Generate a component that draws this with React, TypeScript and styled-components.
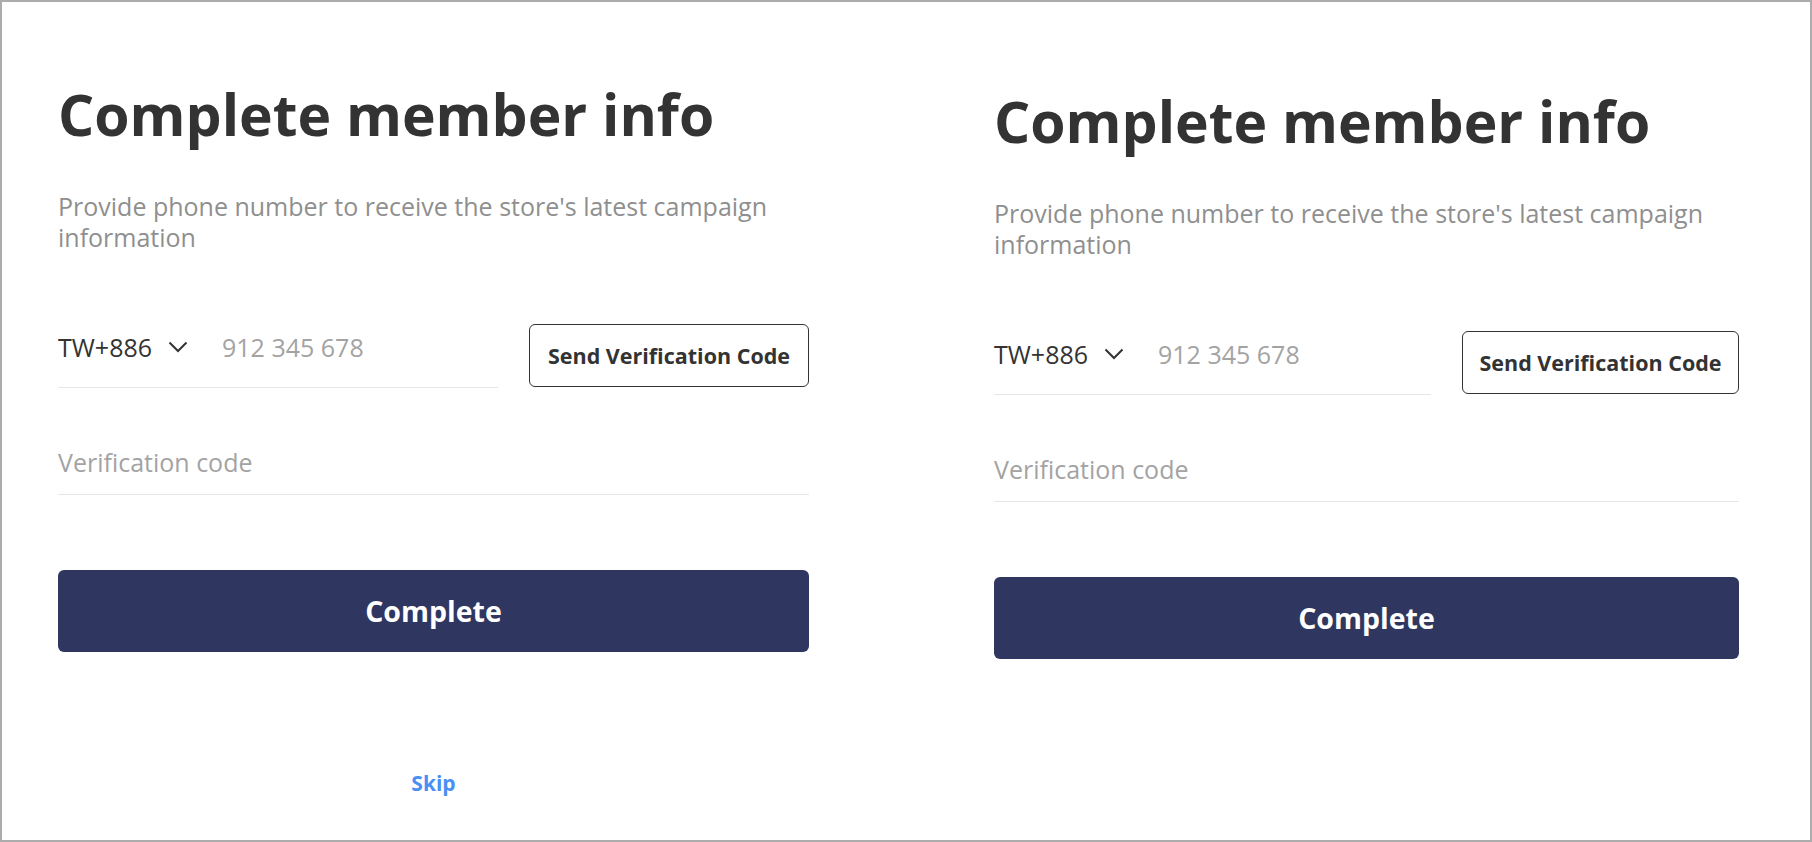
import React from "react";
import styled, { createGlobalStyle } from "styled-components";

const GlobalStyle = createGlobalStyle`
  html, body {
    margin: 0;
    padding: 0;
    background: #ffffff;
  }
  body {
    font-family: "Open Sans", "Noto Sans", sans-serif;
    color: #333333;
  }
  * {
    box-sizing: border-box;
  }
`;

const Frame = styled.div`
  width: 1812px;
  height: 842px;
  border: 2px solid #acacac;
  display: flex;
  overflow: hidden;
  background: #ffffff;
`;

const Panel = styled.section<{ $offsetTop: number; $offsetLeft: number; $basis: string }>`
  flex: ${(p) => p.$basis};
  padding: ${(p) => p.$offsetTop}px 0 0 ${(p) => p.$offsetLeft}px;
`;

const Form = styled.div<{ $width: number }>`
  width: ${(p) => p.$width}px;
  display: flex;
  flex-direction: column;
`;

const Title = styled.h1`
  margin: 0;
  font-size: 57px;
  line-height: 76px;
  font-weight: 700;
  color: #333333;
  white-space: nowrap;
`;

const Subtitle = styled.p`
  margin: 39px 0 0;
  font-size: 25px;
  line-height: 31px;
  color: #8f8f8f;
`;

const PhoneRow = styled.div`
  margin-top: 71px;
  display: flex;
  align-items: flex-start;
  gap: 31px;
`;

const Field = styled.div<{ $padTop: number }>`
  height: 64px;
  padding-top: ${(p) => p.$padTop}px;
  border-bottom: 1px solid #e6e6e6;
  display: flex;
  align-items: flex-start;
  font-size: 25px;
  line-height: 30px;
`;

const PhoneField = styled(Field)`
  flex: 1;
`;

const CodeField = styled(Field)`
  margin-top: 43px;
`;

const Country = styled.div`
  display: flex;
  align-items: center;
  gap: 16px;
  color: #333333;
  margin-right: 34px;
`;

const Placeholder = styled.span`
  color: #a3a3a3;
`;

const Chevron = styled.svg`
  width: 20px;
  height: 12px;
  display: block;
`;

const SendButton = styled.button<{ $width: number }>`
  width: ${(p) => p.$width}px;
  height: 63px;
  flex: none;
  border: 1px solid #333333;
  border-radius: 6px;
  background: #ffffff;
  font-family: inherit;
  font-size: 21.5px;
  font-weight: 700;
  color: #333333;
  padding: 0;
`;

const CompleteButton = styled.button`
  margin-top: 75px;
  height: 82px;
  border: none;
  border-radius: 6px;
  background: #2f3760;
  color: #ffffff;
  font-family: inherit;
  font-size: 28.5px;
  font-weight: 700;
`;

const Skip = styled.a`
  margin-top: 117px;
  align-self: center;
  font-size: 21px;
  line-height: 28px;
  font-weight: 700;
  color: #4a8ff2;
  text-decoration: none;
`;

const MemberForm = ({
  width,
  buttonWidth,
  showSkip,
}: {
  width: number;
  buttonWidth: number;
  showSkip: boolean;
}) => (
  <Form $width={width}>
    <Title>Complete member info</Title>
    <Subtitle>Provide phone number to receive the store's latest campaign information</Subtitle>
    <PhoneRow>
      <PhoneField $padTop={8}>
        <Country>
          <span>TW+886</span>
          <Chevron viewBox="0 0 20 12">
            <polyline points="1.5,1.5 10,10 18.5,1.5" fill="none" stroke="#333" strokeWidth="2" />
          </Chevron>
        </Country>
        <Placeholder>912 345 678</Placeholder>
      </PhoneField>
      <SendButton $width={buttonWidth}>Send Verification Code</SendButton>
    </PhoneRow>
    <CodeField $padTop={16}>
      <Placeholder>Verification code</Placeholder>
    </CodeField>
    <CompleteButton>Complete</CompleteButton>
    {showSkip && <Skip href="#">Skip</Skip>}
  </Form>
);

export default function App() {
  return (
    <>
      <GlobalStyle />
      <Frame>
        <Panel $basis="0 0 934px" $offsetTop={74} $offsetLeft={56}>
          <MemberForm width={751} buttonWidth={280} showSkip />
        </Panel>
        <Panel $basis="1" $offsetTop={81} $offsetLeft={58}>
          <MemberForm width={745} buttonWidth={277} showSkip={false} />
        </Panel>
      </Frame>
    </>
  );
}
